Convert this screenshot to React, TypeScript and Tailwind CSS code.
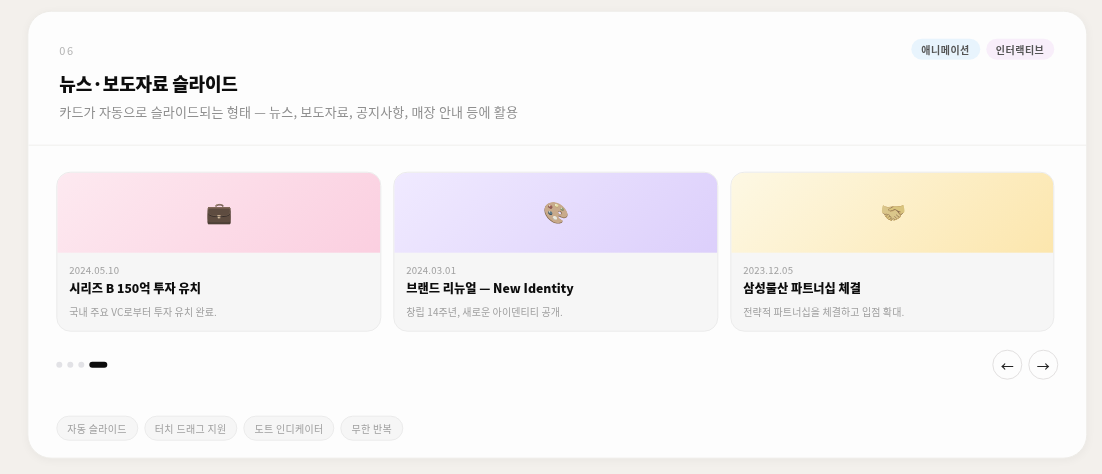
const slides = [
  { emoji: "💼", date: "2024.05.10", title: <>시리즈 B 150억 투자 유치</>, desc: "국내 주요 VC로부터 투자 유치 완료.", bg: "bg-[linear-gradient(135deg,#fde9f0,#fbcfe0)]", w: "w-[325px]" },
  { emoji: "🎨", date: "2024.03.01", title: <>브랜드 리뉴얼 — <span className="text-[12.3px]">New Identity</span></>, desc: "창립 14주년, 새로운 아이덴티티 공개.", bg: "bg-[linear-gradient(135deg,#f0eaff,#dccffb)]", w: "w-[325px]" },
  { emoji: "🤝", date: "2023.12.05", title: <>삼성물산 파트너십 체결</>, desc: "전략적 파트너십을 체결하고 입점 확대.", bg: "bg-[linear-gradient(135deg,#fdf8e4,#fce6ad)]", w: "w-[324px]" },
];
const chips = ["자동 슬라이드", "터치 드래그 지원", "도트 인디케이터", "무한 반복"];

function Arrow({ glyph }: { glyph: string }) {
  return (
    <button className="w-[30px] h-[30px] rounded-full border border-[#e2e0e0] flex items-center justify-center text-[13px] leading-none font-medium text-[#222222]">
      {glyph}
    </button>
  );
}

export default function App() {
  return (
    <div className="w-[1102px] h-[474px] overflow-hidden bg-[#f3f0ec] pt-[11px] pl-[27px] font-['Noto_Sans_CJK_KR','Noto_Sans',sans-serif]">
      <div className="w-[1060px] h-[448px] bg-[#fdfdfd] rounded-[24px] border border-[#edebe7] shadow-[0_2px_8px_rgba(0,0,0,0.04)] overflow-hidden [will-change:transform] [transform:translate3d(0.3px,-0.3px,0)]">
        <header className="h-[134px] border-b border-[#f0efed] pt-[30px] pl-[31px] pr-[32px] flex justify-between">
          <div>
            <div className="text-[11px] leading-[16px] tracking-[0.14em] text-[#b4b4b4]">06</div>
            <h2 className="mt-[12px] text-[18px] leading-[26px] font-black tracking-[-0.2px] text-[#0d0d0d]">뉴스·보도자료 슬라이드</h2>
            <p className="mt-[6px] text-[13px] leading-[20px] tracking-[0.2px] text-[#8f8f8f]">카드가 자동으로 슬라이드되는 형태 — 뉴스, 보도자료, 공지사항, 매장 안내 등에 활용</p>
          </div>
          <div className="flex gap-[6px] -mt-[3px]">
            <span className="h-[21px] px-[10px] rounded-full bg-[#e8f4fd] text-[10px] leading-[21px] font-semibold tracking-[0.05em] text-[#555555]">애니메이션</span>
            <span className="h-[21px] px-[10px] rounded-full bg-[#f8eefa] text-[10px] leading-[21px] font-semibold tracking-[0.05em] text-[#555555]">인터랙티브</span>
          </div>
        </header>
        <div className="pt-[26px] pl-[28px] pr-[31px]">
          <div className="flex gap-[12px]">
            {slides.map((s) => (
              <article key={s.date} className={`${s.w} h-[160px] rounded-[14px] border border-[#ebebeb] bg-[#f6f6f6] overflow-hidden`}>
                <div className={`h-[80px] flex items-center justify-center text-[21px] pt-[2px] pl-[2px] ${s.bg}`}>
                  <span className="font-['Noto_Color_Emoji','Noto_Sans_CJK_KR',sans-serif] [filter:sepia(0.4)_saturate(0.55)_brightness(0.92)]">{s.emoji}</span>
                </div>
                <div className="pt-[10px] px-[12px]">
                  <div className="text-[9.6px] leading-[14px] tracking-[0.02em] text-[#a0a0a0]">{s.date}</div>
                  <div className="mt-[1px] text-[12.2px] leading-[20px] font-extrabold text-[#0d0d0d]">{s.title}</div>
                  <div className="mt-[6px] text-[10px] leading-[16px] tracking-[0.01em] text-[#a0a0a0]">{s.desc}</div>
                </div>
              </article>
            ))}
          </div>
          <div className="mt-[18px] flex items-center justify-between -mr-[3px]">
            <div className="flex items-center gap-[5px]">
              <i className="w-[6px] h-[6px] rounded-full bg-[#e2e2e6]" />
              <i className="w-[6px] h-[6px] rounded-full bg-[#e2e2e6]" />
              <i className="w-[6px] h-[6px] rounded-full bg-[#e2e2e6]" />
              <i className="w-[18px] h-[6px] rounded-full bg-[#0d0d0d]" />
            </div>
            <div className="flex gap-[6px]">
              <Arrow glyph="←" />
              <Arrow glyph="→" />
            </div>
          </div>
          <div className="mt-[36px] flex gap-[6px]">
            {chips.map((c) => (
              <span key={c} className="h-[25px] px-[10px] rounded-full border border-[#ebebeb] bg-[#f6f6f6] text-[10px] leading-[23px] tracking-[0.03em] text-[#a0a0a0]">{c}</span>
            ))}
          </div>
        </div>
      </div>
    </div>
  );
}
